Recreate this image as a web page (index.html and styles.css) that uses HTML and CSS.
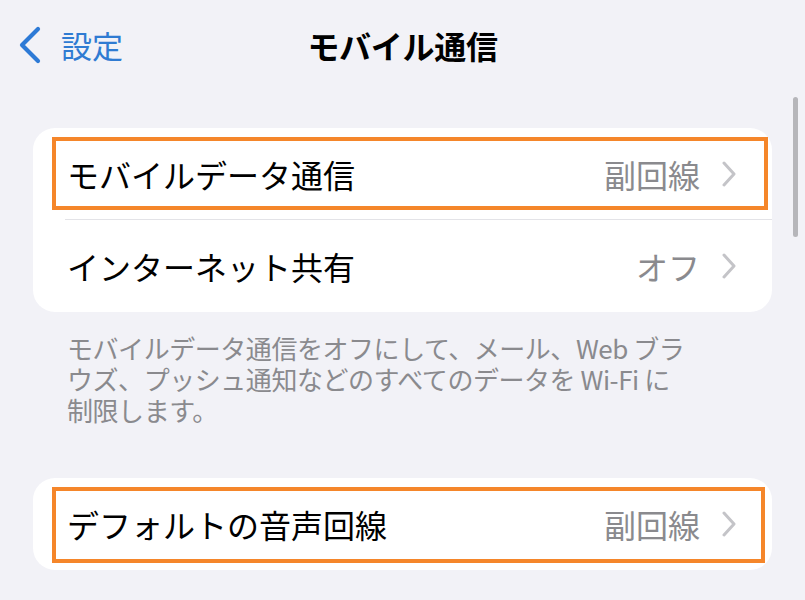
FILE: index.html
```html
<!DOCTYPE html>
<html lang="ja">
<head>
<meta charset="utf-8">
<link rel="stylesheet" href="styles.css">
</head>
<body>
<div class="screen">
  <header class="nav">
    <div class="back">
      <svg class="back-icon" width="26" height="38" viewBox="0 0 26 38"><path d="M21 3 L5 19 L21 35" fill="none" stroke="#2d7ad6" stroke-width="4.2" stroke-linecap="round" stroke-linejoin="round"/></svg>
      <span class="back-label">設定</span>
    </div>
    <h1 class="title">モバイル通信</h1>
    <div></div>
  </header>

  <section class="card first">
    <div class="row r1">
      <span class="label">モバイルデータ通信</span>
      <span class="value">副回線</span>
      <svg class="chev" width="16" height="26" viewBox="0 0 16 26"><path d="M3 2 L13 13 L3 24" fill="none" stroke="#c4c4c8" stroke-width="3" stroke-linecap="round" stroke-linejoin="round"/></svg>
      <div class="mark m1"></div>
    </div>
    <div class="sep"></div>
    <div class="row r2">
      <span class="label">インターネット共有</span>
      <span class="value">オフ</span>
      <svg class="chev" width="16" height="26" viewBox="0 0 16 26"><path d="M3 2 L13 13 L3 24" fill="none" stroke="#c4c4c8" stroke-width="3" stroke-linecap="round" stroke-linejoin="round"/></svg>
    </div>
  </section>

  <div class="footer">
    <div class="fline">モバイルデータ通信をオフにして、メール、Web ブラ</div>
    <div class="fline">ウズ、プッシュ通知などのすべてのデータを Wi-Fi に</div>
    <div class="fline">制限します。</div>
  </div>

  <section class="card second">
    <div class="row r3">
      <span class="label">デフォルトの音声回線</span>
      <span class="value">副回線</span>
      <svg class="chev" width="16" height="26" viewBox="0 0 16 26"><path d="M3 2 L13 13 L3 24" fill="none" stroke="#c4c4c8" stroke-width="3" stroke-linecap="round" stroke-linejoin="round"/></svg>
      <div class="mark m2"></div>
    </div>
  </section>

  <div class="scrollbar"></div>
</div>
</body>
</html>
```

FILE: styles.css
```css
html, body {
  margin: 0;
  padding: 0;
}
body {
  background: #f2f2f7;
  font-family: "Noto Sans CJK JP", "Noto Sans", sans-serif;
  color: #000;
  width: 805px;
  height: 600px;
  overflow: hidden;
}
.screen {
  position: relative;
  width: 805px;
  height: 600px;
}
.nav {
  height: 90px;
  display: grid;
  grid-template-columns: 1fr auto 1fr;
  align-items: center;
}
.back {
  display: flex;
  align-items: center;
  padding-left: 17px;
  gap: 18px;
}
.back-icon {
  display: block;
}
.back-label {
  color: #2f7bd2;
  font-size: 31px;
  line-height: 40px;
}
.title {
  margin: 0;
  font-size: 32px;
  font-weight: 700;
  line-height: 40px;
  letter-spacing: -0.3px;
}
.card {
  background: #fff;
  border-radius: 22px;
  margin-left: 33px;
  width: 739px;
}
.card.first {
  margin-top: 38px;
}
.row {
  position: relative;
  display: flex;
  align-items: center;
  padding: 0 35px 0 34px;
}
.r1 { height: 91px; }
.r2 { height: 92px; }
.r3 { height: 92px; }
.label {
  flex: 1;
  font-size: 32px;
  line-height: 40px;
}
.value {
  font-size: 32px;
  line-height: 40px;
  color: #8a8a8e;
  margin-right: 21px;
}
.chev {
  display: block;
}
.sep {
  height: 1px;
  background: #e3e3e7;
  margin-left: 32px;
}
.mark {
  position: absolute;
  border: 4px solid #f5862a;
  pointer-events: none;
}
.m1 {
  left: 19px;
  right: 4px;
  top: 9px;
  bottom: 9px;
}
.m2 {
  left: 19px;
  right: 7px;
  top: 9px;
  bottom: 7px;
}
.footer {
  margin-left: 33px;
  padding: 20px 0 0 34px;
  height: 145px;
  box-sizing: border-box;
  display: flex;
  flex-direction: column;
}
.fline {
  font-size: 26px;
  line-height: 31px;
  height: 31px;
  overflow: visible;
  white-space: nowrap;
  color: #8a8a8e;
  letter-spacing: -0.45px;
}
.card.second {
  margin-top: 21px;
}
.scrollbar {
  position: absolute;
  left: 793px;
  top: 97px;
  width: 5px;
  height: 140px;
  border-radius: 3px;
  background: #b6b6ba;
}
```
